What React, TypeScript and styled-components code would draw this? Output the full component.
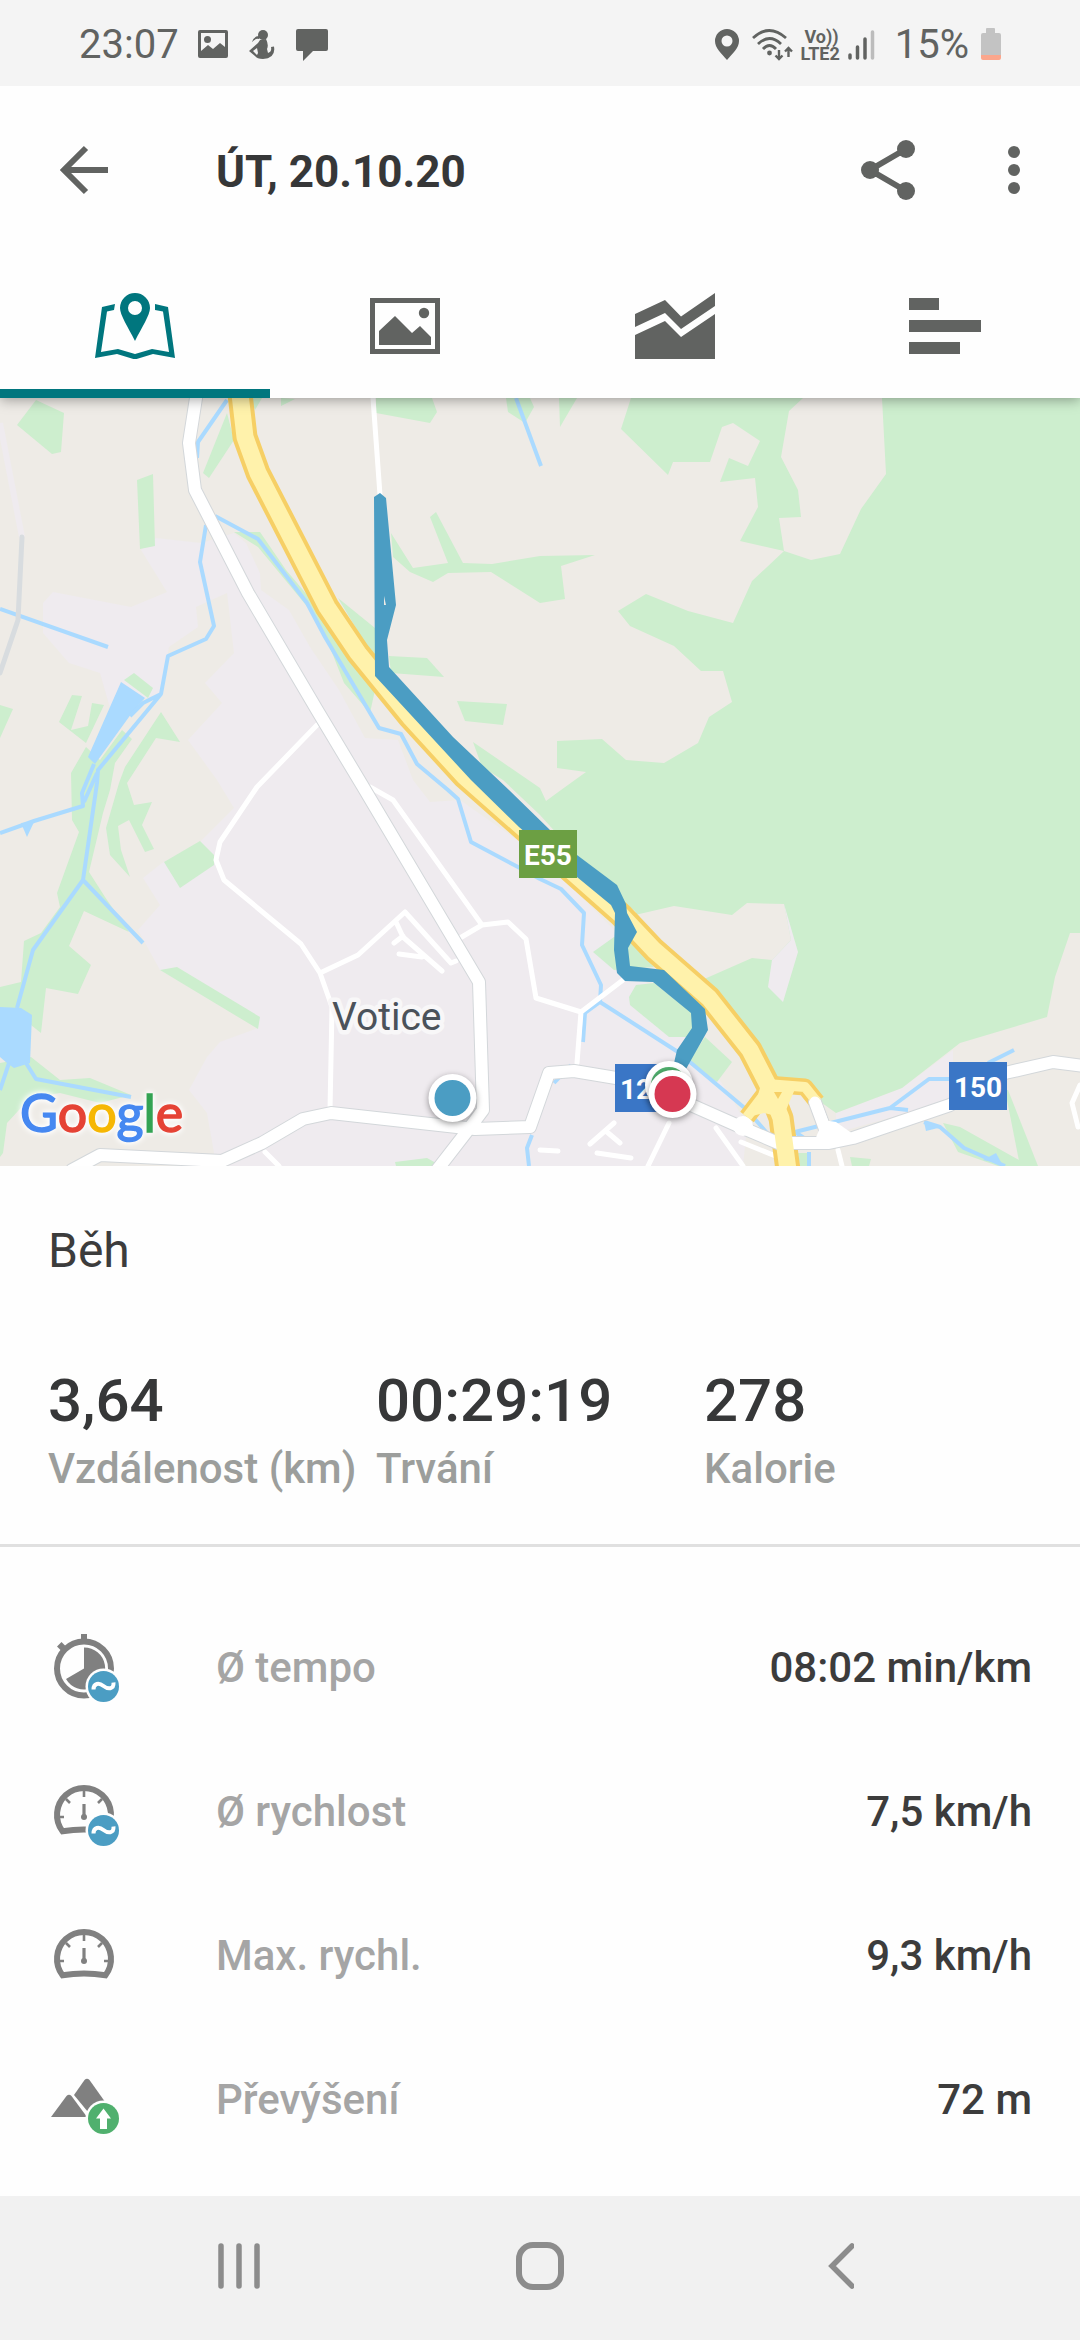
import React from "react";
import styled, { createGlobalStyle } from "styled-components";

const color = {
  page: "#fefefe",
  status: "#f4f4f4",
  nav: "#f1f1f1",
  icon: "#616361",
  teal: "#00767e",
  ink: "#363738",
  label: "#9c9e9c",
  rowLabel: "#a5a5a5",
  rowValue: "#3c3c3c",
  metric: "#808080",
  track: "#4b9dc3",
  land: "#eeebe6",
  town: "#efebef",
  forest: "#cdeece",
  water: "#aadaff",
  roadEdge: "#d3d7da",
  highway: "#fff2ab",
  highwayEdge: "#f6cf65",
};

const GlobalStyle = createGlobalStyle`
  *, *::before, *::after { box-sizing: border-box; }
  body {
    margin: 0;
    background: ${color.page};
    font-family: Roboto, "Noto Sans", sans-serif;
  }
  button {
    appearance: none;
    border: 0;
    padding: 0;
    background: none;
    color: inherit;
    font: inherit;
    cursor: pointer;
  }
  svg { display: block; }
`;

const Screen = styled.div`
  display: flex;
  flex-direction: column;
  min-height: 100vh;
`;

const StatusBar = styled.div`
  display: flex;
  align-items: center;
  justify-content: space-between;
  height: 86px;
  padding: 4px 79px 0;
  background: ${color.status};
  color: ${color.icon};
  font-size: 40px;
  line-height: 48px;
`;

const StatusGroup = styled.div<{ $gap: number }>`
  display: flex;
  align-items: center;
  gap: ${(p) => p.$gap}px;
`;

const Carrier = styled.div`
  display: flex;
  flex-direction: column;
  font-size: 18px;
  font-weight: 700;
  line-height: 17px;
  margin: 0 7px 0 6px;
`;

const CarrierTop = styled.span`
  padding-left: 4px;
`;

const Percent = styled.span`
  margin: 0 12px 0 20px;
`;

const AppBar = styled.header`
  position: relative;
  z-index: 2;
  display: flex;
  align-items: center;
  height: 168px;
  padding: 0 30px 0 48px;
  background: ${color.page};
`;

const IconButton = styled.button<{ $width: number }>`
  display: flex;
  align-items: center;
  justify-content: center;
  width: ${(p) => p.$width}px;
  height: 72px;
  color: ${color.icon};
`;

const Title = styled.h1`
  flex: 1;
  margin: 0;
  padding: 4px 0 0 96px;
  color: ${color.ink};
  font-size: 44px;
  font-weight: 700;
  line-height: 52px;
`;

const Actions = styled.div`
  display: flex;
  gap: 54px;
`;

const Tabs = styled.div`
  position: relative;
  z-index: 1;
  display: grid;
  grid-template-columns: repeat(4, 1fr);
  height: 144px;
  background: ${color.page};
  box-shadow: 0 2px 12px rgba(0, 0, 0, 0.35);
`;

const Tab = styled.button<{ $active?: boolean }>`
  display: flex;
  align-items: center;
  justify-content: center;
  color: ${(p) => (p.$active ? color.teal : color.icon)};
  box-shadow: ${(p) => (p.$active ? `inset 0 -9px ${color.teal}` : "none")};
`;

const MapPanel = styled.section`
  overflow: hidden;
  background: ${color.land};

  svg {
    width: 100%;
    height: auto;
  }
`;

const MapText = styled.text`
  font-family: Roboto, sans-serif;
`;

const Wordmark = styled.text`
  font-family: Lato, sans-serif;
  font-size: 52px;
  font-weight: 400;
  filter: drop-shadow(0 0 2px #fff) drop-shadow(0 0 3px #fff);
`;

const Summary = styled.section`
  padding: 56px 48px 47px;
  border-bottom: 3px solid #e0e0e0;
`;

const Sport = styled.h2`
  margin: 0;
  color: ${color.rowValue};
  font-size: 48px;
  font-weight: 400;
  line-height: 58px;
`;

const Totals = styled.dl`
  display: grid;
  grid-template-columns: repeat(3, 1fr);
  margin: 85px 0 0;
`;

const Total = styled.div`
  display: flex;
  flex-direction: column-reverse;
  gap: 4px;
`;

const TotalValue = styled.dd`
  margin: 0;
  color: ${color.ink};
  font-size: 60px;
  font-weight: 500;
  line-height: 72px;
`;

const TotalLabel = styled.dt`
  color: ${color.label};
  font-size: 42px;
  font-weight: 500;
  line-height: 56px;
  white-space: nowrap;
`;

const Metrics = styled.dl`
  flex: 1;
  margin: 0;
  padding: 49px 48px 24px;
`;

const Metric = styled.div`
  display: flex;
  align-items: center;
  height: 144px;
  font-size: 42px;
  font-weight: 500;
  line-height: 48px;
`;

const MetricLabel = styled.dt`
  flex: 1;
  padding-left: 96px;
  color: ${color.rowLabel};
`;

const MetricValue = styled.dd`
  margin: 0;
  color: ${color.rowValue};
`;

const NavBar = styled.nav`
  display: grid;
  grid-template-columns: repeat(3, 1fr);
  height: 144px;
  padding: 0 88px 4px;
  background: ${color.nav};
  color: #8c8c8c;
`;

const NavButton = styled.button`
  display: flex;
  align-items: center;
  justify-content: center;
`;

const AvgBadge = () => (
  <g>
    <circle cx="55.5" cy="54.5" r="18" fill={color.page} />
    <circle cx="55.5" cy="54.5" r="15.5" fill={color.track} />
    <path
      d="M45.5 57.5C45.5 51 51 50.5 55.5 54S66 57.5 65.5 50.5"
      fill="none"
      stroke="#fff"
      strokeWidth="4"
    />
  </g>
);

const GaugeShape = () => (
  <g fill="none" stroke={color.metric}>
    <path d="M14.5 55.3A27 27 0 1 1 57.5 55.3Q36 51.5 14.5 55.3Z" strokeWidth="6" />
    <path d="M36 14v7M10 41h6M56 41h6M18 23l4 4M54 23l-4 4" strokeWidth="2.6" />
    <path d="M36 28v13" strokeWidth="3.2" />
    <circle cx="36" cy="41" r="3" fill={color.metric} stroke="none" />
  </g>
);

const MetricSvg = ({ children }: { children: React.ReactNode }) => (
  <svg width="72" height="72" viewBox="0 0 72 72" aria-hidden="true">
    {children}
  </svg>
);

const PaceIcon = () => (
  <MetricSvg>
    <g fill={color.metric}>
      <path d="M33 2h6v6h-6zM9 14.500l4.500-4.500 4 4-4.500 4.500z" />
      <circle cx="36" cy="36.500" r="27" fill="none" stroke={color.metric} strokeWidth="6" />
      <path d="M36 36.500V15.500A21 21 0 1 1 18 47z" />
    </g>
    <AvgBadge />
  </MetricSvg>
);

const AvgSpeedIcon = () => (
  <MetricSvg>
    <GaugeShape />
    <AvgBadge />
  </MetricSvg>
);

const MaxSpeedIcon = () => (
  <MetricSvg>
    <GaugeShape />
  </MetricSvg>
);

const AscentIcon = () => (
  <MetricSvg>
    <g fill={color.metric}>
      <path d="M3 53L18.500 32Q21 29.500 23.500 32L39 53z" />
      <path d="M26 31L36.500 16Q39 13.500 41.500 16L60 42L46 53L40 48z" />
    </g>
    <circle cx="55.500" cy="54.500" r="18" fill={color.page} />
    <circle cx="55.500" cy="54.500" r="15.500" fill="#50b06e" />
    <path d="M55.500 44.500L63 54.500H59V65H52V54.500H48z" fill="#fff" />
  </MetricSvg>
);

const totals = [
  { label: "Vzdálenost (km)", value: "3,64" },
  { label: "Trvání", value: "00:29:19" },
  { label: "Kalorie", value: "278" },
];

const metrics = [
  { label: "Ø tempo", value: "08:02 min/km", Icon: PaceIcon },
  { label: "Ø rychlost", value: "7,5 km/h", Icon: AvgSpeedIcon },
  { label: "Max. rychl.", value: "9,3 km/h", Icon: MaxSpeedIcon },
  { label: "Převýšení", value: "72 m", Icon: AscentIcon },
];

const forests = [
  "36,2 64,15 61,54 52,56 17,27",
  "137,82 153,76 155,148 140,151",
  "227,15 234,42 209,80 203,75",
  "251,0 262,0 255,12",
  "234,134 260,134 286,172 320,212 365,275 375,292 370,315 344,285 331,252 310,212 258,149",
  "338,200 375,230 375,262",
  "281,0 295,1 281,8",
  "376,0 432,0 437,14 430,25 376,15",
  "506,0 530,0 534,9 525,25 508,14",
  "391,135 413,170 448,165 430,119 436,114 463,165 492,166 540,158 595,157 561,168 565,201 540,205 491,174 448,175 433,184 410,174 393,159",
  "389,258 427,260 444,279 391,275",
  "457,303 507,306 503,327 465,323",
  "559,0 577,0 560,29",
  "593,554 614,539 633,545 654,569 614,572",
  "629,599 636,587 654,585 692,615 692,639 669,639 630,607",
  "705,639 732,664 717,684 688,665",
  "1005,692 1008,692 1038,768 1020,768",
  "943,725 960,729 1019,762 1022,768 998,768 958,754",
  "850,759 871,761 869,768 852,768",
  "798,755 809,755 809,768 800,768",
  "395,764 427,760 436,765 434,768 396,768",
  "124,282 134,275 153,290 148,300",
  "72,297 82,298 71,332 88,328 92,305 104,307 86,345 59,324",
  "0,307 13,311 0,340",
  "161,314 180,344 156,340 127,385 134,407 152,404 142,427 154,451 145,454 129,422 118,428 121,452 130,479 110,457 106,430 119,385 125,369",
  "86,349 100,362 122,332 132,341 115,365 110,392 103,415 89,474 105,499 129,534 84,513 69,548 91,567 78,596 46,590 41,635 31,627 0,612 0,589 21,584 24,543 41,535 60,509 57,495 79,434 72,422 71,375",
  "31,659 60,682 90,680 131,697 100,705 60,695 30,700 7,725 3,755 0,759 0,665",
  "164,464 200,443 214,457 214,467 180,490",
  "160,572 177,569 260,619 258,631",
  "631,0 1080,0 1080,535 1070,535 1055,579 1047,619 960,645 902,690 836,715 822,705 805,685 774,680 757,652 716,599 636,522 578,459 540,417 503,382 482,369 473,344 540,390 546,403 561,392 586,374 557,370 557,343 602,341 626,362 664,365 698,345 709,319 732,304 723,273 701,273 674,248 630,228 618,213 646,196 688,213 733,225 752,183 784,153 740,143 758,109 755,80 720,84 729,60 748,68 760,43 733,25 722,29 710,64 673,64 668,77 621,31",
];

const clearings = [
  "803,0 882,0 886,76 861,111 840,156 811,162 784,153 779,120 801,119 798,92 781,59 789,13",
  "635,517 674,508 732,517 747,505 784,506 791,542 772,562 752,560 702,582",
];

const townAreas = [
  "156,140 201,145 234,135 246,145 260,175 261,192 289,212 310,249 339,292 365,340 398,342 413,382 430,404 460,402 517,442 561,479 614,532 614,572 660,590 691,639 733,702 747,729 743,768 212,768 214,755 207,715 189,692 207,659 220,644 258,630 160,572 138,532 160,507 143,480 162,465 200,444 234,410 217,382 188,342 222,305 205,285 234,255 227,195 196,209 198,229 169,249 160,296 110,310 100,275 69,265 43,235 43,205 53,194 131,209 167,194 141,152",
  "836,715 902,690 953,652 953,702 836,735",
  "784,506 798,554 783,604 768,589 772,562 791,542",
];

const lakes = [
  "121,284 145,300 134,312 95,366 88,359",
  "0,609 21,610 32,617 30,665 14,670 7,665 0,659",
  "21,425 34,424 27,439",
  "924,724 942,729 926,733",
  "983,762 996,755 1002,766",
];

const streams =
  "M227 2L198 44L197 60M215 118L258 141L307 205L325 239L379 330L401 336L417 366L448 392L458 401L471 444L518 469L540 481L561 491L584 515L582 547L601 587L600 604L678 654L747 712L767 735M600 604L585 615L583 644M571 667L554 685M532 737L527 750L529 768M206 127L200 164L214 228L206 241L168 258L161 296L143 305L130 318M161 296L98 372L97 385L83 482L33 552L17 610M83 482L143 545M94 366L82 395L83 408L34 423L0 435M97 375L84 404M0 211L108 249M26 665L36 681L131 699M9 665L0 692M516 0L541 68M1014 652L988 665M950 681L929 681L890 710L795 734L804 740M890 710L908 712M924 724L940 729L964 750L1005 768M809 754V768";

const lanes =
  "M317 327L257 389L220 444L216 462L224 482L301 546L320 575L332 609L330 712M320 575L358 557L405 514L451 565L456 563M396 524L403 539L442 573M394 545L403 538M399 556L422 559M370 389L393 402L482 527M460 540L482 527L508 524L526 541L536 600L581 614L623 582M581 614L577 665M373 0L380 97M626 509L633 515M669 725L648 768M716 730L743 768M741 744L778 759M838 752L842 768M614 725L590 746M607 734L620 745M597 755L631 760M540 752L558 753M1080 687L1072 705L1078 729M265 754L279 768";

const mainRoads =
  "M196 0L189 45L195 92L248 195L317 312L362 387L479 584L483 712L468 732L437 772M72 772L100 757L222 763L262 745L303 721L331 715L475 731L530 729L549 675L574 673L616 680L673 699L743 730L778 745L829 745L853 740L950 707L1005 675L1053 664L1084 668M815 704L829 742";

const highway =
  "M240 -4L245 39L258 75L327 209L358 255L410 319L464 378L540 445L578 479L621 517L654 552L709 600L750 652L768 687L781 720L788 772";
const ramps = "M767 686L805 689L817 704M766 694L747 719";

const RouteMap = () => (
  <svg viewBox="0 0 1080 768" role="img" aria-label="Mapa trasy">
    <rect width="1080" height="768" fill={color.land} />
    <g fill={color.town}>
      <polygon points={townAreas[0]} />
      <polygon points={townAreas[1]} />
    </g>
    <g fill={color.forest}>
      {forests.map((points) => (
        <polygon key={points} points={points} />
      ))}
    </g>
    <g fill={color.land}>
      {clearings.map((points) => (
        <polygon key={points} points={points} />
      ))}
    </g>
    <polygon points={townAreas[2]} fill={color.town} />
    <g fill={color.water}>
      {lakes.map((points) => (
        <polygon key={points} points={points} />
      ))}
    </g>
    <g fill="none" strokeLinejoin="round">
      <path d="M0 25L22 139" stroke={color.town} strokeWidth="6" />
      <path d={streams} stroke={color.water} strokeWidth="4" />
      <path d="M22 139L18 222L0 275" stroke="#d8dcdf" strokeWidth="5" strokeLinecap="round" />
      <path d={lanes} stroke="#fff" strokeWidth="5" strokeLinecap="round" />
      <path d={ramps} stroke={color.highwayEdge} strokeWidth="17" />
      <path d={highway} stroke={color.highwayEdge} strokeWidth="25" />
      <path d={mainRoads} stroke={color.roadEdge} strokeWidth="14" strokeLinecap="round" />
      <path d={mainRoads} stroke="#fff" strokeWidth="12" strokeLinecap="round" />
      <circle cx="743" cy="728" r="10" fill="#fff" />
      <polygon points="823,722 836,724 853,736 815,742" fill="#fff" />
      <path d={ramps} stroke={color.highway} strokeWidth="10" />
      <path d={highway} stroke={color.highway} strokeWidth="17" />
      <polygon points="760,690 795,691 786,712 781,719 764,715 752,718" fill={color.highway} />
      <path d="M815 704L829 740" stroke="#fff" strokeWidth="11" strokeLinecap="round" />
      <polygon points="774,694 782,694 778,701" fill={color.highwayEdge} />
    </g>
    <path
      d="M374 99L380 95L386 100L396 207L387 242L389 269L453 339L509 392L550 432L577 457L617 487L626 506L627 515L637 534L628 550L630 568L664 572L705 611L708 632L686 671L674 665L677 652L692 630L691 615L653 584L625 583L617 575L614 552L615 515L611 507L577 479L519 429L471 382L375 278Z"
      fill={color.track}
    />
    <path d="M384 198L386 207H384Z" fill={color.land} />

    <rect x="519" y="432" width="58" height="48" fill="#6c9f43" />
    <rect x="615" y="666" width="58" height="48" fill="#3a76c6" />
    <rect x="949" y="664" width="58" height="48" fill="#3a76c6" />
    <g fill="#fff" fontSize="28" fontWeight="700" textAnchor="middle">
      <MapText x="548" y="467">E55</MapText>
      <MapText x="644" y="701">121</MapText>
      <MapText x="978" y="699">150</MapText>
    </g>
    <MapText
      x="332"
      y="632"
      fontSize="39"
      fill="#4b525a"
      stroke="#f8f7f8"
      strokeWidth="9"
      strokeLinejoin="round"
      paintOrder="stroke"
    >
      Votice
    </MapText>

    <g filter="drop-shadow(0 2px 3px rgba(0,0,0,0.4))">
      <circle cx="452.500" cy="700" r="24" fill="#fff" />
      <circle cx="669" cy="687" r="24" fill="#fff" />
    </g>
    <circle cx="452.500" cy="700" r="18" fill={color.track} />
    <circle cx="669" cy="687" r="18" fill="#50b06e" />
    <g filter="drop-shadow(0 2px 3px rgba(0,0,0,0.4))">
      <circle cx="672.500" cy="696" r="24" fill="#fff" />
    </g>
    <circle cx="672.500" cy="696" r="18" fill="#d63852" />

    <Wordmark x="20" y="734" strokeWidth="1.5">
      <tspan fill="#4688f1" stroke="#4688f1">G</tspan>
      <tspan fill="#e54335" stroke="#e54335">o</tspan>
      <tspan fill="#f6b704" stroke="#f6b704">o</tspan>
      <tspan fill="#4688f1" stroke="#4688f1">g</tspan>
      <tspan fill="#34a353" stroke="#34a353">l</tspan>
      <tspan fill="#e54335" stroke="#e54335">e</tspan>
    </Wordmark>
  </svg>
);

const StatusLeftIcons = () => (
  <StatusGroup $gap={20}>
    <svg width="32" height="32" viewBox="0 0 32 32" fill="currentColor" aria-hidden="true">
      <path
        fillRule="evenodd"
        d="M3 1h26q2 0 2 2v24q0 2-2 2H3q-2 0-2-2V3q0-2 2-2zm1 3v18l7-6 5 4 7-6 5 4V4z"
      />
      <circle cx="10.500" cy="10.500" r="3.500" />
    </svg>
    <svg width="26" height="32" viewBox="0 0 26 32" fill="currentColor" aria-hidden="true">
      <circle cx="14" cy="6" r="5" />
      <path d="M10 7Q5 7 3 13Q7 9 10 10z" />
      <path
        fillRule="evenodd"
        d="M11 11L17 10Q20 16 18 20L19 24Q23 23 22 18L25 17.500Q27 29 14 30Q8 30 6 27L0 22L9 14zM8 19L4 22L8 26L9 24z"
      />
    </svg>
    <svg width="34" height="34" viewBox="0 0 34 34" fill="currentColor" aria-hidden="true">
      <path d="M3 1h28q2 0 2 2v18q0 2-2 2H18L8 33V23H3q-2 0-2-2V3q0-2 2-2z" />
    </svg>
  </StatusGroup>
);

const App = () => (
  <Screen>
    <GlobalStyle />
    <StatusBar>
      <StatusGroup $gap={18}>
        <span>23:07</span>
        <StatusLeftIcons />
      </StatusGroup>
      <StatusGroup $gap={0}>
        <StatusGroup $gap={12}>
          <svg width="26" height="32" viewBox="0 0 26 32" fill="currentColor" aria-hidden="true">
            <path
              fillRule="evenodd"
              d="M13 0A12 12 0 0 1 25 12C25 19 19 24 13 31C7 24 1 19 1 12A12 12 0 0 1 13 0zM13 6.500a5.500 5.500 0 1 0 0 11a5.500 5.500 0 0 0 0-11z"
            />
          </svg>
          <svg width="42" height="34" viewBox="0 0 42 34" fill="none" stroke="currentColor" strokeWidth="2.800" aria-hidden="true">
            <path d="M1 10Q17 -5 34 10M6 16Q17.500 5 29 16M11 21Q17.500 14 24 21" />
            <circle cx="17.500" cy="25" r="2.400" fill="currentColor" stroke="none" />
            <path d="M27 22v9M23.500 27.500L27 31l3.500-3.500M36.500 29v-9M33 23.500L36.500 20l3.500 3.500" strokeWidth="2.400" />
          </svg>
        </StatusGroup>
        <Carrier>
          <CarrierTop>Vo))</CarrierTop>
          <span>LTE2</span>
        </Carrier>
        <svg width="28" height="32" viewBox="0 0 28 32" stroke="currentColor" strokeWidth="3.500" strokeLinecap="round" aria-hidden="true">
          <path d="M3 26v3M10.500 18v11M18 10v19" />
          <path d="M25.500 3v26" stroke="#bcbcbc" />
        </svg>
        <Percent>15%</Percent>
        <svg width="20" height="34" viewBox="0 0 20 34" aria-hidden="true">
          <path d="M5 1q0-1 1-1h7q1 0 1 1v4h4q2 0 2 2v21H0V7q0-2 2-2h3z" fill="#c3c3c3" />
          <path d="M0 27h20v3q0 2-2 2H2q-2 0-2-2z" fill="#fba68c" />
        </svg>
      </StatusGroup>
    </StatusBar>

    <AppBar>
      <IconButton $width={72} aria-label="Zpět">
        <svg width="48" height="50" viewBox="0 0 48 50" fill="none" stroke="currentColor" strokeWidth="6" aria-hidden="true">
          <path d="M26 3L4 25L26 47M4 25H48" />
        </svg>
      </IconButton>
      <Title>ÚT, 20.10.20</Title>
      <Actions>
        <IconButton $width={72} aria-label="Sdílet">
          <svg width="54" height="60" viewBox="0 0 54 60" fill="currentColor" aria-hidden="true">
            <path d="M45 9L9 30L45 51" fill="none" stroke="currentColor" strokeWidth="6" />
            <circle cx="45" cy="9" r="9" />
            <circle cx="9" cy="30" r="9" />
            <circle cx="45" cy="51" r="9" />
          </svg>
        </IconButton>
        <IconButton $width={72} aria-label="Další možnosti">
          <svg width="12" height="48" viewBox="0 0 12 48" fill="currentColor" aria-hidden="true">
            <circle cx="6" cy="6" r="6" />
            <circle cx="6" cy="24" r="6" />
            <circle cx="6" cy="42" r="6" />
          </svg>
        </IconButton>
      </Actions>
    </AppBar>

    <Tabs role="tablist">
      <Tab $active role="tab" aria-selected="true" aria-label="Mapa">
        <svg width="80" height="66" viewBox="0 0 80 66" fill="currentColor" aria-hidden="true">
          <path
            fillRule="evenodd"
            d="M40 0A15 15 0 0 1 55 15C55 22 47 34 40 48C33 34 25 22 25 15A15 15 0 0 1 40 0zM40 8a7 7 0 1 0 0 14a7 7 0 0 0 0-14z"
          />
          <path d="M20 11L7 14L0 65L22 61L40 66.500L58 61L80 65L73 14L60 11V17L68 18.500L74 59L57 56L40 61L23 56L6 59L12 18.500L19 17z" />
        </svg>
      </Tab>
      <Tab role="tab" aria-selected="false" aria-label="Fotky">
        <svg width="70" height="56" viewBox="0 0 70 56" fill="currentColor" aria-hidden="true">
          <path d="M2.500 2.500h65v51h-65z" fill="none" stroke="currentColor" strokeWidth="5" />
          <path d="M9 47V33L25 18L42 35L50 28L61 39V47z" />
          <circle cx="54" cy="15" r="5.200" />
        </svg>
      </Tab>
      <Tab role="tab" aria-selected="false" aria-label="Grafy">
        <svg width="80" height="66" viewBox="0 0 80 66" fill="currentColor" aria-hidden="true">
          <path d="M0 21L30 7L46 23.500L80 0V13L46 36L30 20L0 34z" />
          <path d="M0 42L30 28L46 44L80 21V66H0z" />
        </svg>
      </Tab>
      <Tab role="tab" aria-selected="false" aria-label="Mezičasy">
        <svg width="72" height="56" viewBox="0 0 72 56" fill="currentColor" aria-hidden="true">
          <path d="M0 0h30v12H0zM0 22h72v12H0zM0 44h51v12H0z" />
        </svg>
      </Tab>
    </Tabs>

    <MapPanel>
      <RouteMap />
    </MapPanel>

    <Summary>
      <Sport>Běh</Sport>
      <Totals>
        {totals.map(({ label, value }) => (
          <Total key={label}>
            <TotalLabel>{label}</TotalLabel>
            <TotalValue>{value}</TotalValue>
          </Total>
        ))}
      </Totals>
    </Summary>

    <Metrics>
      {metrics.map(({ label, value, Icon }) => (
        <Metric key={label}>
          <Icon />
          <MetricLabel>{label}</MetricLabel>
          <MetricValue>{value}</MetricValue>
        </Metric>
      ))}
    </Metrics>

    <NavBar aria-label="Systémová navigace">
      <NavButton aria-label="Poslední aplikace">
        <svg width="42" height="46" viewBox="0 0 42 46" stroke="currentColor" strokeWidth="5.500" strokeLinecap="round" aria-hidden="true">
          <path d="M3 3v40M21 3v40M39 3v40" />
        </svg>
      </NavButton>
      <NavButton aria-label="Domů">
        <svg width="48" height="48" viewBox="0 0 48 48" fill="none" stroke="currentColor" strokeWidth="6" aria-hidden="true">
          <rect x="3" y="3" width="42" height="42" rx="14" />
        </svg>
      </NavButton>
      <NavButton aria-label="Zpět">
        <svg width="26" height="46" viewBox="0 0 26 46" fill="none" stroke="currentColor" strokeWidth="5.500" strokeLinecap="round" aria-hidden="true">
          <path d="M24 3L4 23L24 43" />
        </svg>
      </NavButton>
    </NavBar>
  </Screen>
);

export default App;
